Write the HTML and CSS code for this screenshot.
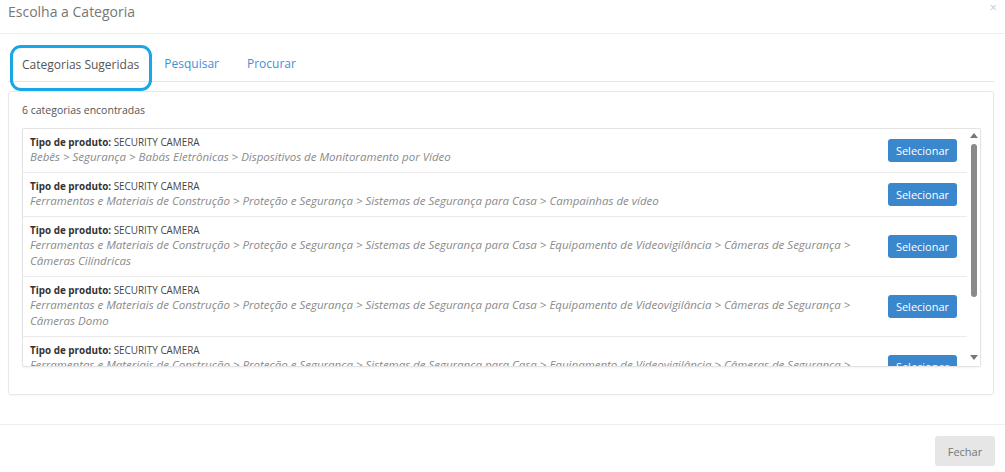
FILE: index.html
```html
<!DOCTYPE html>
<html lang="pt">
<head>
    <meta charset="UTF-8">
    <title>Escolha a Categoria</title>
    <link rel="stylesheet" href="styles.css">
</head>
<body>
    <div class="modal">
        <header class="modal-header">
            <h4>Escolha a Categoria</h4>
            <span class="fechar-x">&times;</span>
        </header>

        <div class="modal-body">
            <nav class="abas">
                <span class="aba ativa">Categorias Sugeridas</span>
                <a class="aba" href="#">Pesquisar</a>
                <a class="aba" href="#">Procurar</a>
            </nav>

            <div class="painel">
                <p class="contagem">6 categorias encontradas</p>
                <div class="lista">
                    <div class="itens">
                        <div class="linha">
                            <div class="info">
                                <div class="tipo"><b>Tipo de produto:</b> SECURITY CAMERA</div>
                                <div class="caminho">Bebês &gt; Segurança &gt; Babás Eletrônicas &gt; Dispositivos de Monitoramento por Vídeo</div>
                            </div>
                            <button class="btn-sel">Selecionar</button>
                        </div>
                        <div class="linha">
                            <div class="info">
                                <div class="tipo"><b>Tipo de produto:</b> SECURITY CAMERA</div>
                                <div class="caminho">Ferramentas e Materiais de Construção &gt; Proteção e Segurança &gt; Sistemas de Segurança para Casa &gt; Campainhas de vídeo</div>
                            </div>
                            <button class="btn-sel">Selecionar</button>
                        </div>
                        <div class="linha">
                            <div class="info">
                                <div class="tipo"><b>Tipo de produto:</b> SECURITY CAMERA</div>
                                <div class="caminho">Ferramentas e Materiais de Construção &gt; Proteção e Segurança &gt; Sistemas de Segurança para Casa &gt; Equipamento de Videovigilância &gt; Câmeras de Segurança &gt; Câmeras Cilíndricas</div>
                            </div>
                            <button class="btn-sel">Selecionar</button>
                        </div>
                        <div class="linha">
                            <div class="info">
                                <div class="tipo"><b>Tipo de produto:</b> SECURITY CAMERA</div>
                                <div class="caminho">Ferramentas e Materiais de Construção &gt; Proteção e Segurança &gt; Sistemas de Segurança para Casa &gt; Equipamento de Videovigilância &gt; Câmeras de Segurança &gt; Câmeras Domo</div>
                            </div>
                            <button class="btn-sel">Selecionar</button>
                        </div>
                        <div class="linha">
                            <div class="info">
                                <div class="tipo"><b>Tipo de produto:</b> SECURITY CAMERA</div>
                                <div class="caminho">Ferramentas e Materiais de Construção &gt; Proteção e Segurança &gt; Sistemas de Segurança para Casa &gt; Equipamento de Videovigilância &gt; Câmeras de Segurança &gt; Câmeras Ocultas</div>
                            </div>
                            <button class="btn-sel">Selecionar</button>
                        </div>
                        <div class="linha">
                            <div class="info">
                                <div class="tipo"><b>Tipo de produto:</b> SECURITY CAMERA</div>
                                <div class="caminho">Eletrônicos &gt; Câmeras e Fotografia &gt; Vigilância por Vídeo &gt; Câmeras de Vigilância</div>
                            </div>
                            <button class="btn-sel">Selecionar</button>
                        </div>
                    </div>
                    <!-- barra de rolagem desenhada -->
                    <div class="barra">
                        <span class="seta-cima"></span>
                        <span class="polegar"></span>
                        <span class="seta-baixo"></span>
                    </div>
                </div>
            </div>
        </div>

        <footer class="modal-footer">
            <button class="btn-fechar">Fechar</button>
        </footer>
    </div>
</body>
</html>
```

FILE: styles.css
```css
body {
    font-family: "Open Sans", Arial, sans-serif;
    margin: 0;
    background-color: #fff;
    color: #555;
}

.modal {
    width: 1005px;
    height: 472px;
    background-color: #fff;
}

.modal-header {
    position: relative;
    height: 34px;
    border-bottom: 1px solid #eee;
    padding: 0 8px;
    box-sizing: border-box;
}

.modal-header h4 {
    margin: 0;
    padding-top: 2px;
    font-size: 14px;
    font-weight: normal;
    line-height: 20px;
    color: #777;
}

.fechar-x {
    position: absolute;
    right: 8px;
    top: 1px;
    font-size: 13px;
    line-height: 12px;
    color: #ccc;
}

.modal-body {
    padding: 13px 11px 0 8px;
    height: 391px;
    box-sizing: border-box;
    border-bottom: 1px solid #eee;
}

.abas {
    display: flex;
    height: 34px;
    border-bottom: 1px solid #e6e6e6;
}

.aba {
    padding: 0 14px;
    font-size: 12px;
    line-height: 34px;
    color: #3f8fd6;
    text-decoration: none;
}

.aba.ativa {
    position: relative;
    z-index: 1;
    height: 42px;
    margin-left: 4px;
    margin-right: 0;
    padding: 0 11px 0 10px;
    box-sizing: border-box;
    line-height: 36px;
    color: #555;
    border-radius: 9px;
    outline: 3px solid #17a6e6;
    outline-offset: -1px;
}

.painel {
    margin-top: 9px;
    border: 1px solid #e8e8e8;
    border-radius: 3px;
    padding: 10px 12px 27px 13px;
    box-shadow: 0 1px 2px rgba(0, 0, 0, 0.04);
}

.contagem {
    margin: 0 0 10px;
    font-size: 10.5px;
    line-height: 16px;
    color: #555;
}

.lista {
    display: flex;
    height: 237px;
    border: 1px solid #e3e3e3;
    border-radius: 2px;
    box-shadow: 0 1px 2px rgba(0, 0, 0, 0.05);
}

.itens {
    flex: 1;
    overflow: hidden;
}

.barra {
    width: 13px;
    display: flex;
    flex-direction: column;
    align-items: center;
    padding: 4px 0 6px;
    box-sizing: border-box;
}

.seta-cima {
    width: 0;
    height: 0;
    border-left: 4px solid transparent;
    border-right: 4px solid transparent;
    border-bottom: 5px solid #777;
}

.polegar {
    width: 6px;
    height: 153px;
    margin-top: 6px;
    background-color: #8a8a8a;
    border-radius: 3px;
}

.seta-baixo {
    width: 0;
    height: 0;
    margin-top: auto;
    border-left: 4px solid transparent;
    border-right: 4px solid transparent;
    border-top: 5px solid #777;
}

.linha {
    display: flex;
    align-items: center;
    padding: 6px 10px 7px 7px;
    border-bottom: 1px solid #eaeaea;
}

.info {
    flex: 1;
    padding-right: 30px;
}

.tipo {
    font-size: 9.9px;
    line-height: 14px;
    color: #444;
}

.tipo b {
    color: #333;
}

.caminho {
    font-size: 11.5px;
    line-height: 16px;
    font-style: italic;
    color: #8a8a8a;
}

.btn-sel {
    width: 69px;
    height: 23px;
    background-color: #3a87cd;
    color: #fff;
    border: none;
    border-radius: 3px;
    font-family: inherit;
    font-size: 11px;
    padding: 0;
    cursor: pointer;
}

.modal-footer {
    display: flex;
    justify-content: flex-end;
    padding: 11px 10px 0;
}

.btn-fechar {
    width: 60px;
    height: 30px;
    background-color: #e6e6e6;
    color: #777;
    border: none;
    border-radius: 3px;
    font-family: inherit;
    font-size: 11px;
    cursor: pointer;
}
```
